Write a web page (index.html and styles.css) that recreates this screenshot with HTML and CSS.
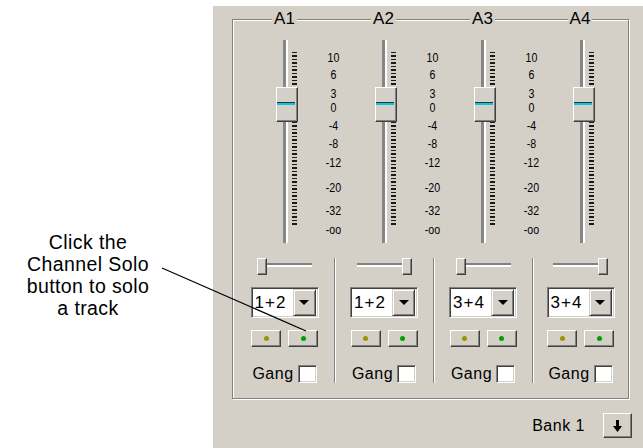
FILE: index.html
```html
<!DOCTYPE html>
<html lang="en">

<head>
    <meta charset="UTF-8">
    <meta name="viewport" content="width=device-width, initial-scale=1.0">
    <title>Mixer - Channel Solo</title>
    <link rel="stylesheet" href="styles.css">
</head>

<body>
    <div class="figure">
        <div class="callout">
            <p>Click the<br>Channel Solo<br>button to solo<br>a track</p>
        </div>

        <div class="panel">
            <div class="group">
                <div class="heads">
                    <span>A1</span>
                    <span>A2</span>
                    <span>A3</span>
                    <span>A4</span>
                </div>

                <div class="faders">
                    <div class="fader">
                        <div class="track"></div>
                        <div class="ticks"></div>
                        <div class="thumb"><i></i></div>
                    </div>
                    <div class="scale">
                        <span style="top: 11px;">10</span>
                        <span style="top: 28px;">6</span>
                        <span style="top: 47px;">3</span>
                        <span style="top: 61px;">0</span>
                        <span style="top: 79px;">-4</span>
                        <span style="top: 97px;">-8</span>
                        <span style="top: 116px;">-12</span>
                        <span style="top: 141px;">-20</span>
                        <span style="top: 164px;">-32</span>
                        <span style="top: 183px;">-oo</span>
                    </div>
                    <div class="fader">
                        <div class="track"></div>
                        <div class="ticks"></div>
                        <div class="thumb"><i></i></div>
                    </div>
                    <div class="scale">
                        <span style="top: 11px;">10</span>
                        <span style="top: 28px;">6</span>
                        <span style="top: 47px;">3</span>
                        <span style="top: 61px;">0</span>
                        <span style="top: 79px;">-4</span>
                        <span style="top: 97px;">-8</span>
                        <span style="top: 116px;">-12</span>
                        <span style="top: 141px;">-20</span>
                        <span style="top: 164px;">-32</span>
                        <span style="top: 183px;">-oo</span>
                    </div>
                    <div class="fader">
                        <div class="track"></div>
                        <div class="ticks"></div>
                        <div class="thumb"><i></i></div>
                    </div>
                    <div class="scale">
                        <span style="top: 11px;">10</span>
                        <span style="top: 28px;">6</span>
                        <span style="top: 47px;">3</span>
                        <span style="top: 61px;">0</span>
                        <span style="top: 79px;">-4</span>
                        <span style="top: 97px;">-8</span>
                        <span style="top: 116px;">-12</span>
                        <span style="top: 141px;">-20</span>
                        <span style="top: 164px;">-32</span>
                        <span style="top: 183px;">-oo</span>
                    </div>
                    <div class="fader">
                        <div class="track"></div>
                        <div class="ticks"></div>
                        <div class="thumb"><i></i></div>
                    </div>
                </div>

                <div class="strips">
                    <div class="strip">
                        <div class="pan"><div class="knob"></div></div>
                        <div class="combo"><span>1+2</span><b></b></div>
                        <div class="solo">
                            <div class="btn"><i class="olive"></i></div>
                            <div class="btn"><i class="green"></i></div>
                        </div>
                        <div class="gang">Gang <span class="check"></span></div>
                    </div>
                    <div class="strip">
                        <div class="pan right"><div class="knob"></div></div>
                        <div class="combo"><span>1+2</span><b></b></div>
                        <div class="solo">
                            <div class="btn"><i class="olive"></i></div>
                            <div class="btn"><i class="green"></i></div>
                        </div>
                        <div class="gang">Gang <span class="check"></span></div>
                    </div>
                    <div class="strip">
                        <div class="pan"><div class="knob"></div></div>
                        <div class="combo"><span>3+4</span><b></b></div>
                        <div class="solo">
                            <div class="btn"><i class="olive"></i></div>
                            <div class="btn"><i class="green"></i></div>
                        </div>
                        <div class="gang">Gang <span class="check"></span></div>
                    </div>
                    <div class="strip">
                        <div class="pan right"><div class="knob"></div></div>
                        <div class="combo"><span>3+4</span><b></b></div>
                        <div class="solo">
                            <div class="btn"><i class="olive"></i></div>
                            <div class="btn"><i class="green"></i></div>
                        </div>
                        <div class="gang">Gang <span class="check"></span></div>
                    </div>
                </div>
            </div>

            <div class="bank">
                <span>Bank 1</span>
                <div class="bank-btn">
                    <svg width="9" height="12" viewBox="0 0 9 12"><path d="M3 0h3v6h3l-4.5 6L0 6h3z" fill="#000"/></svg>
                </div>
            </div>
        </div>

        <!-- leader line from the callout to the solo button -->
        <svg class="leader" width="643" height="448" viewBox="0 0 643 448">
            <line x1="162" y1="268" x2="306" y2="331" stroke="#000" stroke-width="1.2"/>
        </svg>
    </div>
</body>

</html>
```

FILE: styles.css
```css
body {
    margin: 0;
    background-color: #ffffff;
    font-family: "Liberation Sans", Arial, sans-serif;
    color: #000000;
}

.figure {
    position: relative;
    display: flex;
    width: 643px;
    height: 448px;
    overflow: hidden;
}

/* annotation on the left */

.callout {
    flex-shrink: 0;
    width: 176px;
    padding: 231px 37px 0 0;
}

.callout p {
    margin: 0;
    font-size: 19.5px;
    line-height: 22px;
    letter-spacing: 0.4px;
    text-align: center;
}

.leader {
    position: absolute;
    top: 0;
    left: 0;
    pointer-events: none;
}

/* mixer panel */

.panel {
    box-sizing: border-box;
    width: 430px;
    height: 442px;
    margin-top: 6px;
    padding: 13px 0 0 19px;
    background-color: #d4d0c8;
}

.group {
    box-sizing: border-box;
    width: 397px;
    height: 380px;
    padding-left: 2px;
    border: 1px solid #808080;
    box-shadow: inset 1px 1px 0 #ffffff, 1px 1px 0 #ffffff;
}

.heads {
    display: grid;
    grid-template-columns: 99px 99px 99px 96px;
    height: 16px;
    margin-top: -9px;
}

.heads span {
    justify-self: center;
    padding: 0 2px;
    background-color: #d4d0c8;
    font-size: 17px;
    line-height: 16px;
}

.faders {
    display: flex;
    height: 203px;
    margin-top: 13px;
    padding-left: 41px;
}

.fader {
    position: relative;
    display: flex;
    flex-shrink: 0;
    width: 22px;
}

.track {
    width: 3px;
    margin-left: 7px;
    border-right: 2px solid #ffffff;
    background-color: #868686;
}

.ticks {
    width: 5px;
    height: 175px;
    margin: 12px 0 0 4px;
    background: repeating-linear-gradient(to bottom, #1a1a1a 0 1.5px, transparent 1.5px 3.5px);
}

.thumb {
    position: absolute;
    top: 47px;
    left: 0;
    box-sizing: border-box;
    width: 22px;
    height: 35px;
    background-color: #d4d0c8;
    border: 1px solid;
    border-color: #ffffff #404040 #404040 #ffffff;
    box-shadow: inset -1px -1px 0 #808080;
}

.thumb i {
    display: block;
    box-sizing: border-box;
    width: 18px;
    height: 3px;
    margin-top: 14px;
    border-top: 1px solid #303030;
    background-color: #00c8e0;
}

.scale {
    position: relative;
    flex-shrink: 0;
    width: 77px;
    font-size: 12.5px;
    line-height: 14px;
}

.scale span {
    position: absolute;
    left: 0;
    right: 6px;
    text-align: center;
    transform: scaleX(0.85);
}

/* lower channel strips */

.strips {
    display: grid;
    grid-template-columns: 99px 99px 99px 96px;
    margin-top: 15px;
}

.strip {
    display: flex;
    flex-direction: column;
    align-items: center;
    height: 125px;
}

.strip + .strip {
    border-left: 1px solid #808080;
    box-shadow: inset 1px 0 0 #ffffff;
}

.pan {
    display: flex;
    width: 55px;
    height: 17px;
    background: linear-gradient(to bottom, transparent 5px, #808080 5px 7px, #ffffff 7px 9px, transparent 9px);
}

.pan.right {
    justify-content: flex-end;
}

.knob {
    box-sizing: border-box;
    width: 10px;
    height: 17px;
    background-color: #d4d0c8;
    border: 1px solid;
    border-color: #ffffff #404040 #404040 #ffffff;
    box-shadow: inset -1px -1px 0 #808080;
}

.combo {
    display: flex;
    align-items: center;
    box-sizing: border-box;
    width: 68px;
    height: 31px;
    margin-top: 12px;
    padding: 1px;
    background-color: #ffffff;
    border: 1px solid;
    border-color: #808080 #ffffff #ffffff #808080;
    box-shadow: inset 1px 1px 0 #404040, inset -1px -1px 0 #d4d0c8;
}

.combo span {
    flex: 1;
    padding-left: 2px;
    font-size: 17px;
    letter-spacing: 1px;
}

.combo b {
    display: flex;
    align-items: center;
    justify-content: center;
    box-sizing: border-box;
    width: 23px;
    height: 27px;
    margin-right: 1px;
    background-color: #d4d0c8;
    border: 1px solid;
    border-color: #d4d0c8 #404040 #404040 #d4d0c8;
    box-shadow: inset 1px 1px 0 #ffffff, inset -1px -1px 0 #808080;
}

.combo b::after {
    content: "";
    border-left: 5px solid transparent;
    border-right: 5px solid transparent;
    border-top: 5px solid #000000;
}

.solo {
    display: flex;
    gap: 7px;
    margin-top: 12px;
}

.btn {
    display: flex;
    align-items: center;
    justify-content: center;
    box-sizing: border-box;
    width: 30px;
    height: 17px;
    background-color: #d4d0c8;
    border: 1px solid;
    border-color: #ffffff #404040 #404040 #ffffff;
    box-shadow: inset -1px -1px 0 #808080;
}

.btn i {
    width: 5px;
    height: 5px;
    border-radius: 50%;
}

.olive {
    background-color: #9a9400;
}

.green {
    background-color: #00a000;
}

.gang {
    display: flex;
    align-items: center;
    gap: 4px;
    margin-top: 18px;
    font-size: 16px;
    letter-spacing: 0.5px;
}

.check {
    box-sizing: border-box;
    width: 19px;
    height: 18px;
    background-color: #ffffff;
    border: 1px solid;
    border-color: #808080 #ffffff #ffffff #808080;
    box-shadow: inset 1px 1px 0 #404040, inset -1px -1px 0 #d4d0c8;
}

/* bank selector */

.bank {
    display: flex;
    align-items: center;
    justify-content: flex-end;
    gap: 18px;
    height: 25px;
    margin-top: 14px;
    padding-right: 11px;
    font-size: 16px;
    letter-spacing: 0.5px;
}

.bank-btn {
    display: flex;
    align-items: center;
    justify-content: center;
    box-sizing: border-box;
    width: 29px;
    height: 25px;
    background-color: #d4d0c8;
    border: 1px solid;
    border-color: #ffffff #404040 #404040 #ffffff;
    box-shadow: inset -1px -1px 0 #808080;
}
```
